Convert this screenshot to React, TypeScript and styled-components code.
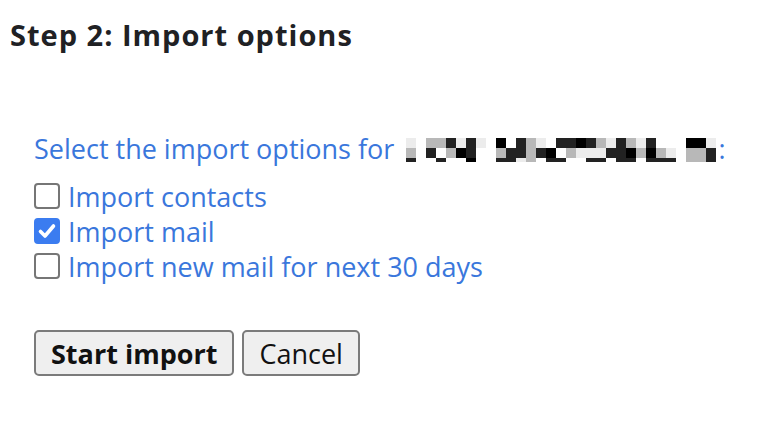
import styled, { createGlobalStyle } from 'styled-components';

const GlobalStyle = createGlobalStyle`
  html, body {
    margin: 0;
    background: #ffffff;
  }
  body {
    font-family: "Open Sans", Roboto, Arial, sans-serif;
  }
`;

const Page = styled.main`
  width: 778px;
  height: 438px;
  box-sizing: border-box;
  padding: 17px 10px 0 10px;
`;

const Heading = styled.h1`
  margin: 0;
  font-size: 29px;
  line-height: 36px;
  font-weight: 700;
  letter-spacing: 1px;
  color: #202124;
`;

const Form = styled.form`
  display: flex;
  flex-direction: column;
  padding: 78px 0 0 24px;
`;

const Prompt = styled.p`
  margin: 0 0 12px;
  display: flex;
  align-items: center;
  font-size: 27px;
  line-height: 36px;
  color: #3a77dc;
`;

const Redacted = styled.svg`
  display: block;
  margin: 1px 2px 0 12px;
`;

const Options = styled.div`
  display: flex;
  flex-direction: column;
`;

const Option = styled.label`
  display: flex;
  align-items: center;
  gap: 8px;
  height: 35px;
  font-size: 27px;
  color: #3a77dc;
  cursor: pointer;
`;

const Box = styled.span<{ $checked?: boolean }>`
  width: 26px;
  height: 26px;
  box-sizing: border-box;
  border-radius: 4px;
  border: 2px solid ${(p) => (p.$checked ? '#3b7cf0' : '#767676')};
  background: ${(p) => (p.$checked ? '#3b7cf0' : '#ffffff')};
  display: flex;
  align-items: center;
  justify-content: center;
  flex-shrink: 0;
  margin-top: -2px;
`;

const Actions = styled.div`
  display: flex;
  gap: 8px;
  margin-top: 46px;
`;

const Button = styled.button<{ $primary?: boolean }>`
  height: 46px;
  padding: 0 15px;
  font-family: "Open Sans", Roboto, Arial, sans-serif;
  font-size: 27px;
  font-weight: ${(p) => (p.$primary ? 700 : 400)};
  color: #111;
  background: #efefef;
  border: 2px solid #7b7b7b;
  border-radius: 5px;
`;

// pixelated (blurred) e-mail address
const shades: Record<string, string> = {
  '.': '#ffffff',
  l: '#ececec',
  g: '#b8b8b8',
  d: '#222222',
  k: '#000000',
};
const rows = [
  'l.ggdldl.k.dgl.ddkdgldgld...kkl',
  'g.d.gkd..gddgdk.glllddkgkgl.ggd',
  'd..d..k..ddlg.dd..dd.dd.ddd.ggd',
];
const rowHeights = [10, 10, 4];

function PixelatedEmail() {
  let y = 0;
  return (
    <Redacted width={310} height={24} viewBox="0 0 310 24" aria-label="hidden address">
      {rows.map((row, r) => {
        const top = y;
        y += rowHeights[r];
        return row.split('').map((c, i) => (
          <rect key={`${r}-${i}`} x={i * 10} y={top} width={10} height={rowHeights[r]} fill={shades[c]} />
        ));
      })}
    </Redacted>
  );
}

function Check() {
  return (
    <svg width="20" height="20" viewBox="0 0 20 20" aria-hidden="true">
      <path d="M3.5 10.5 L8 15 L16.5 5" fill="none" stroke="#fff" strokeWidth="3.6" strokeLinecap="round" strokeLinejoin="round" />
    </svg>
  );
}

const options = [
  { label: 'Import contacts', checked: false },
  { label: 'Import mail', checked: true },
  { label: 'Import new mail for next 30 days', checked: false },
];

export default function App() {
  return (
    <>
      <GlobalStyle />
      <Page>
        <Heading>Step 2: Import options</Heading>
        <Form onSubmit={(e) => e.preventDefault()}>
          <Prompt>
            Select the import options for
            <PixelatedEmail />:
          </Prompt>
          <Options>
            {options.map((o) => (
              <Option key={o.label}>
                <Box $checked={o.checked}>{o.checked && <Check />}</Box>
                {o.label}
              </Option>
            ))}
          </Options>
          <Actions>
            <Button type="submit" $primary>Start import</Button>
            <Button type="button">Cancel</Button>
          </Actions>
        </Form>
      </Page>
    </>
  );
}
